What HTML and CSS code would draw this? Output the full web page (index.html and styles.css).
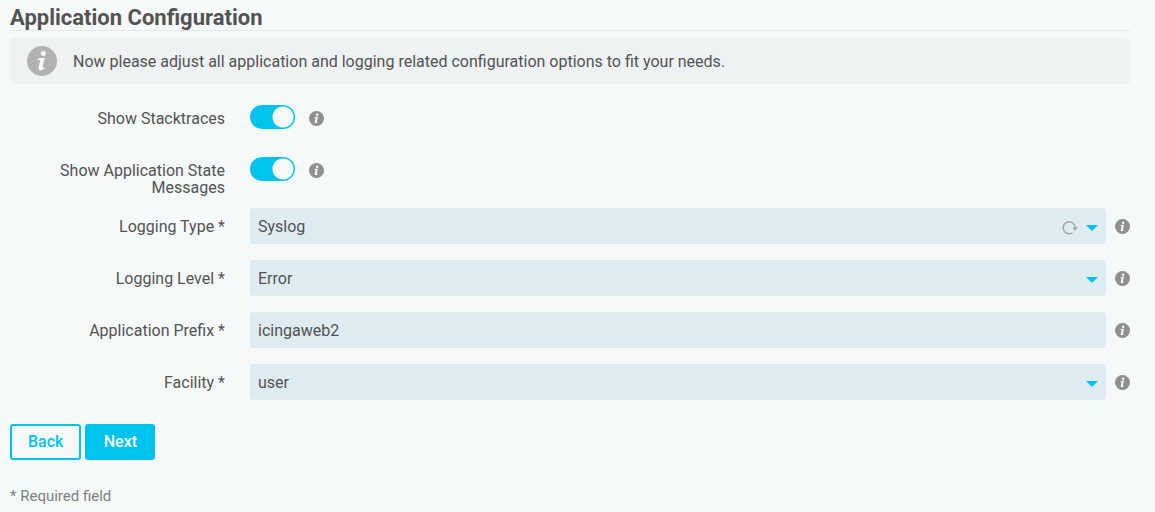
FILE: index.html
```html
<!DOCTYPE html>
<html lang="en">
<head>
<meta charset="utf-8">
<title>Application Configuration</title>
<link rel="stylesheet" href="styles.css">
</head>
<body>
<svg class="defs" aria-hidden="true">
  <symbol id="info" viewBox="0 0 30 30">
    <circle cx="15" cy="15" r="15" fill="currentColor"/>
    <circle class="info-mark" cx="16.4" cy="7.6" r="2.5"/>
    <path class="info-mark" d="M11 12.4c2.2-.3 4.5-.7 6.9-.7l-2.3 9.1c-.2 1 .6 1.1 2.2.2l-.4 1.5c-3 2.500-6.700 2.500-5.900-.9l1.600-6.500c.2-.9-.4-1.200-2.300-1.200z"/>
  </symbol>
</svg>
<main class="page">
  <h1 class="title">Application Configuration</h1>
  <div class="notice">
    <svg class="notice-icon"><use href="#info"/></svg>
    <p class="notice-text">Now please adjust all application and logging related configuration options to fit your needs.</p>
  </div>
  <form class="form">
    <div class="row toggle-row">
      <label class="label" for="stack">Show Stacktraces</label>
      <input class="toggle" type="checkbox" id="stack" checked>
      <svg class="hint"><use href="#info"/></svg>
    </div>
    <div class="row toggle-row">
      <label class="label" for="state">Show Application State Messages</label>
      <input class="toggle" type="checkbox" id="state" checked>
      <svg class="hint"><use href="#info"/></svg>
    </div>
    <div class="row">
      <label class="label" for="type">Logging Type *</label>
      <div class="control">
        <select class="field" id="type"><option>Syslog</option></select>
        <svg class="reload" viewBox="0 0 16 16"><path d="M10.5 12.8A6 6 0 1 1 13.2 8" fill="none" stroke="currentColor" stroke-width="1.6"/><path d="M10.3 7.2h5.7l-2.8 3.6z" fill="currentColor"/></svg>
        <svg class="caret" viewBox="0 0 12 6"><path d="M0 0h12L6 6z" fill="currentColor"/></svg>
      </div>
      <svg class="hint"><use href="#info"/></svg>
    </div>
    <div class="row">
      <label class="label" for="level">Logging Level *</label>
      <div class="control">
        <select class="field" id="level"><option>Error</option></select>
        <svg class="caret" viewBox="0 0 12 6"><path d="M0 0h12L6 6z" fill="currentColor"/></svg>
      </div>
      <svg class="hint"><use href="#info"/></svg>
    </div>
    <div class="row">
      <label class="label" for="prefix">Application Prefix *</label>
      <div class="control"><input class="field" type="text" id="prefix" value="icingaweb2"></div>
      <svg class="hint"><use href="#info"/></svg>
    </div>
    <div class="row">
      <label class="label" for="facility">Facility *</label>
      <div class="control">
        <select class="field" id="facility"><option>user</option></select>
        <svg class="caret" viewBox="0 0 12 6"><path d="M0 0h12L6 6z" fill="currentColor"/></svg>
      </div>
      <svg class="hint"><use href="#info"/></svg>
    </div>
    <div class="buttons">
      <button class="button" type="button">Back</button>
      <button class="button primary" type="submit">Next</button>
    </div>
  </form>
  <p class="required">* Required field</p>
</main>
</body>
</html>
```
FILE: styles.css
```css
* { box-sizing: border-box; }
body {
  margin: 0;
  background: #f5f9fa;
  color: #535353;
  font: 16px/17px Roboto, sans-serif;
}
.defs { position: absolute; width: 0; height: 0; }
.info-mark { fill: #f5f9fa; }
.page { padding: 6px 25px 0 10px; }
.title {
  margin: 0 0 7px;
  border-bottom: 1px solid #e4e8e9;
  font-size: 22px;
  line-height: 24px;
}
.notice {
  display: flex;
  align-items: center;
  gap: 16px;
  min-height: 46px;
  padding: 0 17px;
  background: #eef2f3;
  border-radius: 4px;
}
.notice-icon { width: 30px; height: 30px; color: #b2b2b2; }
.notice-text { margin: 0; }
.form { padding-top: 12px; }
.row { display: flex; min-height: 36px; margin-bottom: 16px; }
.label { flex: none; width: 215px; margin-right: 25px; padding: 10px 0 0 40px; text-align: right; }
.toggle {
  appearance: none;
  width: 45px;
  height: 24px;
  margin: 9px 5px 0 0;
  border-radius: 12px;
  background: radial-gradient(circle at 33px 12px, #f5f9fa 10px, #00c3ed 11px);
}
.control { position: relative; flex: 1; }
.field {
  appearance: none;
  display: block;
  width: 100%;
  height: 36px;
  padding: 0 8px;
  border: 0;
  border-radius: 4px;
  background: #deebf0;
  color: #535353;
  font: inherit;
}
.caret, .reload { position: absolute; pointer-events: none; }
.caret { right: 8px; top: 17px; width: 12px; height: 6px; color: #00c3ed; }
.reload { right: 28px; top: 12px; width: 16px; height: 16px; color: #aaa; }
.hint { flex: none; width: 15px; height: 15px; margin: 11px 0 0 9px; color: #8f8f8f; }
.toggle-row { min-height: 40px; margin-bottom: 12px; }
.toggle-row .label { padding-top: 14px; }
.toggle-row .hint { margin-top: 15px; }
.buttons { display: flex; gap: 4px; padding-top: 8px; }
.button {
  height: 36px;
  min-width: 70px;
  padding: 0 16px;
  border: 2px solid #00c3ed;
  border-radius: 3px;
  background: #f5f9fa;
  color: #00c3ed;
  font: 500 16px/20px Roboto, sans-serif;
}
.primary { background: #00c3ed; color: #f5f9fa; }
.required { margin: 28px 0 0; color: #7f7f7f; font-size: 15px; }
```
